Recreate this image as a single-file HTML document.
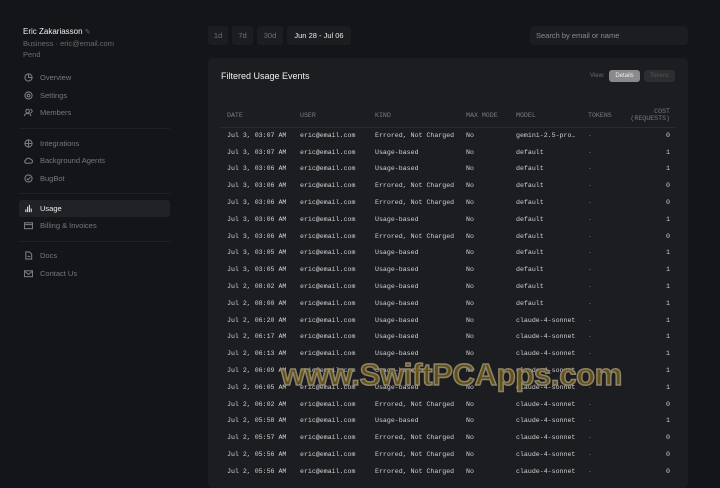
<!DOCTYPE html>
<html><head><style>
*{margin:0;padding:0;box-sizing:border-box}
body{width:720px;height:480px;background:#141518;font-family:"Liberation Sans",sans-serif;color:#ddd;position:relative;overflow:hidden}
.a{position:absolute}
.nav{position:absolute;left:24px;font-size:7.5px;color:#77787c;display:flex;align-items:center;gap:7px}
.nav svg{width:9px;height:9px;stroke:#7a7b7f;fill:none;stroke-width:1.2}
.sep{position:absolute;left:19px;width:151px;height:1px;background:#202124}
.btn{position:absolute;top:26px;height:19px;background:#1c1d20;border-radius:3px;font-size:7.5px;color:#6f7074;text-align:center;line-height:19px}
.card{position:absolute;left:208px;top:58px;width:480px;height:430px;background:#1c1d20;border-radius:5px}
table{position:absolute;left:220px;top:104px;width:456px;border-collapse:collapse;font-family:"Liberation Mono",monospace;font-size:6.6px;color:#cfd0d2}
td{height:16.8px;white-space:nowrap;padding-left:7px}
th{font-weight:normal;color:#7a7b7f;text-align:left;padding-left:7px;height:23px;border-bottom:1px solid #2a2b2e;font-size:6.6px;vertical-align:middle}
td:last-child,th:last-child{text-align:right;padding-right:6px}
.d{color:#6a6b6f}
</style></head><body>
<div class="a" style="left:23px;top:27px;font-size:8px;color:#f0f0f0">Eric Zakariasson <span style="color:#666;font-size:7px">✎</span></div>
<div class="a" style="left:23px;top:39px;font-size:7.5px;color:#6a6b6f">Business · eric@email.com</div>
<div class="a" style="left:23px;top:50px;font-size:7.5px;color:#6a6b6f">Pend</div>
<div class="nav" style="top:73px"><svg viewBox="0 0 10 10"><circle cx="5" cy="5" r="4"/><path d="M5 1v4h4"/></svg>Overview</div>
<div class="nav" style="top:91px"><svg viewBox="0 0 10 10"><circle cx="5" cy="5" r="1.5"/><circle cx="5" cy="5" r="4"/></svg>Settings</div>
<div class="nav" style="top:108px"><svg viewBox="0 0 10 10"><circle cx="4" cy="3.5" r="2"/><path d="M0.5 9c0-2 1.5-3 3.5-3s3.5 1 3.5 3M7 1.5a2 2 0 010 4"/></svg>Members</div>
<div class="sep" style="top:128px"></div>
<div class="nav" style="top:139px"><svg viewBox="0 0 10 10"><circle cx="5" cy="5" r="4"/><path d="M1 5h8M5 1v8"/></svg>Integrations</div>
<div class="nav" style="top:156px"><svg viewBox="0 0 10 10"><path d="M2.5 8h5a2 2 0 000-4 3 3 0 00-5.5 0.5A1.8 1.8 0 002.5 8z"/></svg>Background Agents</div>
<div class="nav" style="top:174px"><svg viewBox="0 0 10 10"><circle cx="5" cy="5" r="4"/><path d="M3 5l1.5 1.5L7 3.5"/></svg>BugBot</div>
<div class="sep" style="top:193px"></div>
<div class="a" style="left:19px;top:200px;width:151px;height:17px;background:#212226;border-radius:3px"></div>
<div class="nav" style="top:204px;color:#eee"><svg viewBox="0 0 10 10" style="stroke:#ddd"><path d="M2 9V6M4 9V3M6 9V1M8 9V5"/></svg>Usage</div>
<div class="nav" style="top:221px"><svg viewBox="0 0 10 10"><rect x="0.5" y="2" width="9" height="6.5"/><path d="M0.5 4h9"/></svg>Billing &amp; Invoices</div>
<div class="sep" style="top:241px"></div>
<div class="nav" style="top:251px"><svg viewBox="0 0 10 10"><path d="M2 1h4l2.5 2.5V9H2z M4 6h3"/></svg>Docs</div>
<div class="nav" style="top:269px"><svg viewBox="0 0 10 10"><rect x="0.5" y="2" width="9" height="6.5"/><path d="M0.5 2.5l4.5 3.5 4.5-3.5"/></svg>Contact Us</div>

<div class="btn" style="left:208px;width:20px">1d</div>
<div class="btn" style="left:232px;width:21px">7d</div>
<div class="btn" style="left:257px;width:26px">30d</div>
<div class="btn" style="left:287px;width:64px;color:#e8e8e8">Jun 28 - Jul 06</div>
<div class="a" style="left:530px;top:26px;width:158px;height:19px;background:#1c1d20;border-radius:4px;font-size:7.5px;color:#8a8b8f;line-height:19px;padding-left:6px">Search by email or name</div>

<div class="card"></div>
<div class="a" style="left:221px;top:71px;font-size:9px;color:#f0f0f0">Filtered Usage Events</div>
<div class="a" style="left:590px;top:73px;font-size:6px;color:#6a6b6f">View:</div>
<div class="a" style="left:609px;top:70px;width:31px;height:12px;background:#8a8a8c;border-radius:3px;font-size:6px;color:#eee;text-align:center;line-height:12px">Details</div>
<div class="a" style="left:644px;top:70px;width:31px;height:12px;background:#2c2d30;border-radius:3px;font-size:6px;color:#555;text-align:center;line-height:12px">Tokens</div>

<table>
<tr><th style="width:73px">DATE</th><th style="width:75px">USER</th><th style="width:91px">KIND</th><th style="width:50px">MAX MODE</th><th style="width:72px">MODEL</th><th style="width:40px">TOKENS</th><th>COST<br>(REQUESTS)</th></tr>
<tr><td>Jul 3, 03:07 AM</td><td>eric@email.com</td><td>Errored, Not Charged</td><td>No</td><td>gemini-2.5-pro…</td><td class="d">-</td><td>0</td></tr>
<tr><td>Jul 3, 03:07 AM</td><td>eric@email.com</td><td>Usage-based</td><td>No</td><td>default</td><td class="d">-</td><td>1</td></tr>
<tr><td>Jul 3, 03:06 AM</td><td>eric@email.com</td><td>Usage-based</td><td>No</td><td>default</td><td class="d">-</td><td>1</td></tr>
<tr><td>Jul 3, 03:06 AM</td><td>eric@email.com</td><td>Errored, Not Charged</td><td>No</td><td>default</td><td class="d">-</td><td>0</td></tr>
<tr><td>Jul 3, 03:06 AM</td><td>eric@email.com</td><td>Errored, Not Charged</td><td>No</td><td>default</td><td class="d">-</td><td>0</td></tr>
<tr><td>Jul 3, 03:06 AM</td><td>eric@email.com</td><td>Usage-based</td><td>No</td><td>default</td><td class="d">-</td><td>1</td></tr>
<tr><td>Jul 3, 03:06 AM</td><td>eric@email.com</td><td>Errored, Not Charged</td><td>No</td><td>default</td><td class="d">-</td><td>0</td></tr>
<tr><td>Jul 3, 03:05 AM</td><td>eric@email.com</td><td>Usage-based</td><td>No</td><td>default</td><td class="d">-</td><td>1</td></tr>
<tr><td>Jul 3, 03:05 AM</td><td>eric@email.com</td><td>Usage-based</td><td>No</td><td>default</td><td class="d">-</td><td>1</td></tr>
<tr><td>Jul 2, 08:02 AM</td><td>eric@email.com</td><td>Usage-based</td><td>No</td><td>default</td><td class="d">-</td><td>1</td></tr>
<tr><td>Jul 2, 08:00 AM</td><td>eric@email.com</td><td>Usage-based</td><td>No</td><td>default</td><td class="d">-</td><td>1</td></tr>
<tr><td>Jul 2, 06:20 AM</td><td>eric@email.com</td><td>Usage-based</td><td>No</td><td>claude-4-sonnet</td><td class="d">-</td><td>1</td></tr>
<tr><td>Jul 2, 06:17 AM</td><td>eric@email.com</td><td>Usage-based</td><td>No</td><td>claude-4-sonnet</td><td class="d">-</td><td>1</td></tr>
<tr><td>Jul 2, 06:13 AM</td><td>eric@email.com</td><td>Usage-based</td><td>No</td><td>claude-4-sonnet</td><td class="d">-</td><td>1</td></tr>
<tr><td>Jul 2, 06:09 AM</td><td>eric@email.com</td><td>Usage-based</td><td>No</td><td>claude-4-sonnet</td><td class="d">-</td><td>1</td></tr>
<tr><td>Jul 2, 06:05 AM</td><td>eric@email.com</td><td>Usage-based</td><td>No</td><td>claude-4-sonnet</td><td class="d">-</td><td>1</td></tr>
<tr><td>Jul 2, 06:02 AM</td><td>eric@email.com</td><td>Errored, Not Charged</td><td>No</td><td>claude-4-sonnet</td><td class="d">-</td><td>0</td></tr>
<tr><td>Jul 2, 05:58 AM</td><td>eric@email.com</td><td>Usage-based</td><td>No</td><td>claude-4-sonnet</td><td class="d">-</td><td>1</td></tr>
<tr><td>Jul 2, 05:57 AM</td><td>eric@email.com</td><td>Errored, Not Charged</td><td>No</td><td>claude-4-sonnet</td><td class="d">-</td><td>0</td></tr>
<tr><td>Jul 2, 05:56 AM</td><td>eric@email.com</td><td>Errored, Not Charged</td><td>No</td><td>claude-4-sonnet</td><td class="d">-</td><td>0</td></tr>
<tr><td>Jul 2, 05:56 AM</td><td>eric@email.com</td><td>Errored, Not Charged</td><td>No</td><td>claude-4-sonnet</td><td class="d">-</td><td>0</td></tr>
</table>
<div class="a" style="left:281px;top:357px;font-size:31px;font-weight:bold;color:rgba(110,90,20,0.85);-webkit-text-stroke:1.5px rgba(150,140,120,0.9);letter-spacing:-0.3px;white-space:nowrap">www.SwiftPCApps.com</div>
</body></html>
